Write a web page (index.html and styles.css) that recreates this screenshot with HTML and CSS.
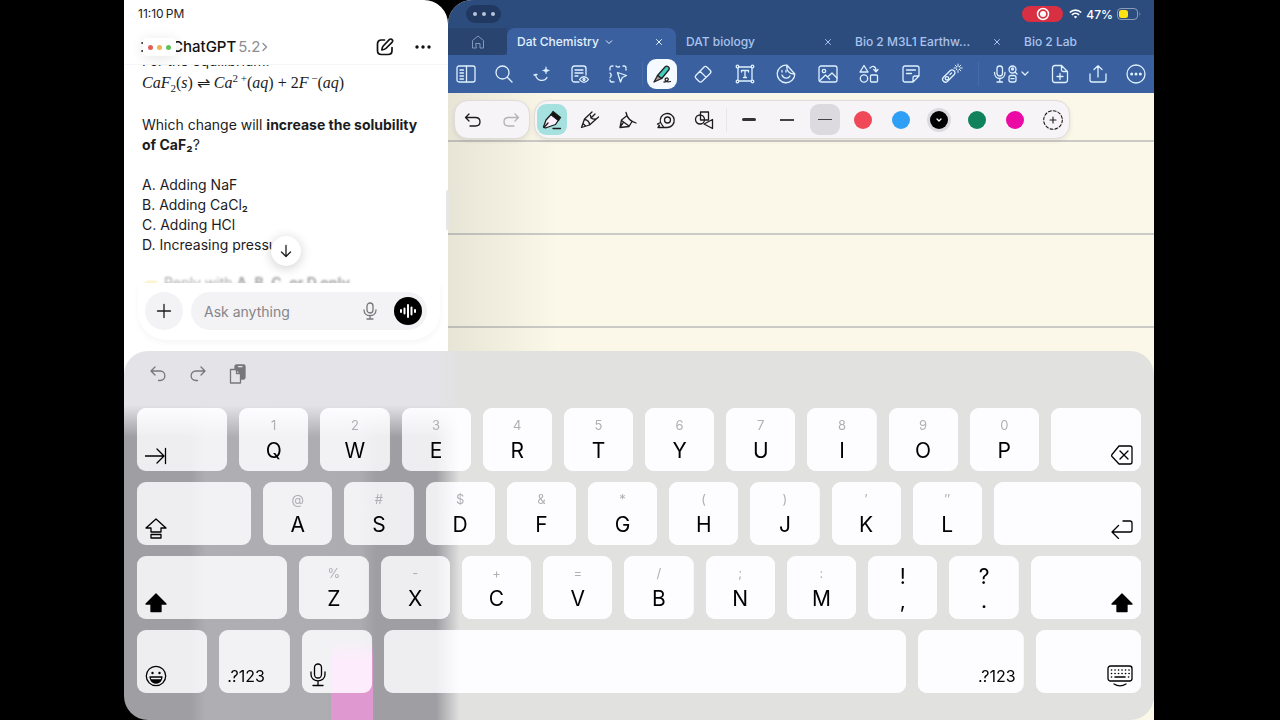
FILE: index.html
```html
<!DOCTYPE html>
<html lang="en">
<head>
	<meta charset="utf-8">
	<meta name="viewport" content="width=device-width, initial-scale=1">
	<title>Dat Chemistry</title>
	<link rel="stylesheet" href="styles.css">
</head>
<body>
	<div class="screen">

		<section class="chat">
			<div class="chat-status">11:10&thinsp;PM</div>
			<header class="chat-header">
				<button class="icon-button menu-button" aria-label="Menu">
					<svg width="20" height="20" viewBox="0 0 20 20"><path d="M2 6h16M2 14h11"/></svg>
				</button>
				<button class="model-button"><b>ChatGPT</b> <span>5.2</span>
					<svg width="6" height="10" viewBox="0 0 6 10"><path d="M1 1.500L4.500 5 1 8.500"/></svg>
				</button>
				<div class="window-controls"><i class="red"></i><i class="yellow"></i><i class="green"></i></div>
				<button class="icon-button compose-button" aria-label="New chat">
					<svg width="18" height="18" viewBox="0 0 18 18"><path d="M8.500 2H5.500C3 2 1.500 3.500 1.500 6v6.500C1.500 15 3 16.500 5.500 16.500H12c2.500 0 4-1.500 4-4V9.500"/><path d="M13.300 1.700c1-1 2.200-.8 2.800-.1.700.7.700 1.800-.1 2.700L9.800 10.500c-.9.900-2.600 1.300-4 1.500.2-1.500.5-3 1.400-4z"/></svg>
				</button>
				<button class="icon-button" aria-label="More">
					<svg width="18" height="6" viewBox="0 0 18 6"><g fill="#111" stroke="none"><circle cx="3" cy="3" r="1.700"/><circle cx="9" cy="3" r="1.700"/><circle cx="15" cy="3" r="1.700"/></g></svg>
				</button>
			</header>

			<div class="messages">
				<div class="message">
					<p class="intro">For the equilibrium:</p>
					<p class="equation"><i>CaF</i><sub>2</sub>(<i>s</i>) ⇌ <i>Ca</i><sup>2 +</sup>(<i>aq</i>) + 2<i>F</i><sup> −</sup>(<i>aq</i>)</p>
					<p>Which change will <strong>increase the solubility of CaF₂</strong>?</p>
					<ol class="answers">
						<li>A. Adding NaF</li>
						<li>B. Adding CaCl₂</li>
						<li>C. Adding HCl</li>
						<li>D. Increasing pressure</li>
					</ol>
					<p class="reply-hint">
						<svg width="16" height="16" viewBox="0 0 16 16"><path d="M1 12c0-3 3-6 6-6h7c2 0 2 2 0 2H9l1 6H5c-3 0-4-1-4-2z" fill="#f5d64a"/></svg>
						<span>Reply with <strong>A, B, C, or D only</strong></span>
					</p>
				</div>
				<button class="scroll-down" aria-label="Scroll to bottom">
					<svg width="14" height="14" viewBox="0 0 14 14"><path d="M7 1.500v11M2.500 8L7 12.500 11.500 8"/></svg>
				</button>
			</div>

			<form class="composer">
				<button type="button" class="add-button" aria-label="Add">
					<svg width="16" height="16" viewBox="0 0 16 16"><path d="M8 1.500v13M1.500 8h13"/></svg>
				</button>
				<div class="ask-box">
					<input type="text" placeholder="Ask anything" aria-label="Ask anything">
					<button type="button" class="dictate-button" aria-label="Dictate">
						<svg width="14" height="18" viewBox="0 0 14 18"><rect x="4" y="1" width="6" height="10" rx="3"/><path d="M1 8c0 7.500 12 7.500 12 0M7 13.500V17M4 17h6"/></svg>
					</button>
					<button type="button" class="voice-button" aria-label="Voice mode">
						<svg width="18" height="16" viewBox="0 0 18 16"><path d="M2 7v2M5.500 5.500v5M9 2v12M12.500 4.500v7M16 7v2"/></svg>
					</button>
				</div>
			</form>
		</section>

		<section class="notes">
			<div class="notes-top">
				<div class="notes-status">
					<button class="multitask" aria-label="Multitasking"><i></i><i></i><i></i></button>
					<div class="status-right">
						<span class="recording"><svg width="14" height="14" viewBox="0 0 14 14"><circle cx="7" cy="7" r="5.500" fill="none" stroke="#fff" stroke-width="1.500"/><circle cx="7" cy="7" r="3" fill="#fff"/></svg></span>
						<svg width="13" height="10" viewBox="0 0 13 10" fill="none" stroke="#fff" stroke-width="1.700"><path d="M.8 3.500c3.300-3.200 8.100-3.200 11.400 0M2.900 5.900c2.100-2 5.100-2 7.200 0"/><path d="M4.800 7.700L6.500 9.600l1.700-1.900c-1-.9-2.400-.9-3.400 0z" fill="#fff" stroke="none"/></svg>
						<span>47%</span>
						<svg width="24" height="12" viewBox="0 0 24 12"><rect x=".5" y=".5" width="20" height="11" rx="3.500" fill="none" stroke="#8b9cba"/><path d="M22.500 4.200c1 .5 1 3 0 3.600z" fill="#8b9cba"/><rect x="2" y="2" width="9" height="8" rx="2.500" fill="#ffe111"/></svg>
					</div>
				</div>
				<nav class="tabs">
					<button class="home-tab" aria-label="Home">
						<svg width="14" height="14" viewBox="0 0 14 14"><path d="M5 13H1.500V5.500L7 1l5.500 4.500V13H9V8.500H5z"/></svg>
					</button>
					<div class="tab tab-active">
						<a href="#">Dat Chemistry <svg width="8" height="6" viewBox="0 0 8 6"><path d="M1 1.500l3 3 3-3"/></svg></a>
						<button aria-label="Close tab"><svg width="8" height="8" viewBox="0 0 8 8"><path d="M1.500 1.500l5 5M6.500 1.500l-5 5"/></svg></button>
					</div>
					<div class="tab">
						<a href="#">DAT biology</a>
						<button aria-label="Close tab"><svg width="8" height="8" viewBox="0 0 8 8"><path d="M1.500 1.500l5 5M6.500 1.500l-5 5"/></svg></button>
					</div>
					<div class="tab">
						<a href="#">Bio 2 M3L1 Earthw...</a>
						<button aria-label="Close tab"><svg width="8" height="8" viewBox="0 0 8 8"><path d="M1.500 1.500l5 5M6.500 1.500l-5 5"/></svg></button>
					</div>
					<div class="tab tab-last"><a href="#">Bio 2 Lab</a></div>
				</nav>
				<div class="toolbar">
					<div class="tool-group">
						<button aria-label="Sidebar"><svg width="20" height="20" viewBox="0 0 20 20"><rect x="1" y="2" width="18" height="16" rx="2"/><path d="M10.500 2v16M4 6h3.500M4 9h3.500M4 12h3.500M4 15h3.500"/></svg></button>
						<button aria-label="Search"><svg width="20" height="20" viewBox="0 0 20 20"><circle cx="8.500" cy="8.500" r="6.500"/><path d="M13.300 13.300L18 18"/></svg></button>
						<button aria-label="Assistant"><svg width="20" height="20" viewBox="0 0 20 20"><path d="M2 11l3-.5M3.500 10.500c1 7 9 7.500 11.500 3"/><path d="M14 3c.4 2.500 1 3 3.500 3.500C15 7 14.400 7.500 14 10c-.4-2.500-1-3-3.500-3.500C13 6 13.600 5.500 14 3z" fill="#dff1ff" stroke-width=".5"/></svg></button>
						<button aria-label="Read only"><svg width="20" height="20" viewBox="0 0 20 20"><path d="M9 18H4.500c-1.500 0-2.500-1-2.500-2.500v-11C2 3 3 2 4.500 2h9C15 2 16 3 16 4.500V11M5 6h8M5 9h8M5 12h3"/><path d="M9.500 15.500c2.500-3.700 6.500-3.700 9 0-2.500 3.700-6.500 3.700-9 0z"/><circle cx="14" cy="15.500" r="1"/></svg></button>
						<button aria-label="Lasso"><svg width="20" height="20" viewBox="0 0 20 20"><path d="M2 6V4c0-1 1-2 2-2h1M8 2c1.500 1.500 3 1.500 4 0M15 2h1c1 0 2 1 2 2v2M2 9c1.500 1 1.500 3 0 4.500M2 16c0 1 1 2 2 2h2" stroke-dasharray="4 1"/><path d="M9.500 8.500l9 3-4.200 2-1.800 4.500z"/></svg></button>
					</div>
					<i class="divider"></i>
					<div class="tool-group tool-group-wide">
						<button class="tool-active" aria-label="Pen"><svg width="22" height="22" viewBox="0 0 22 22"><path d="M6.500 12.500L14 4c2-2 5.500.5 3.700 3l-7 8.500z" fill="#43cdbd"/><path d="M6.500 12.500L3 19l7.700-3.500z" fill="#a99" /><path d="M13 19c3 0 5-2 4-3.500s-4 .5-2.500 2c1 1.500 3.500 1.500 5 1"/></svg></button>
						<button aria-label="Eraser"><svg width="20" height="20" viewBox="0 0 20 20"><path d="M2.800 11.500l8-8.300c1-1 2.300-1 3.300 0l3 3c1 1 1 2.300 0 3.300l-8 7.800c-1 1-2.200 1-3.200 0l-3-3c-.8-.8-.8-2-.1-2.800zM7 7.200l6.200 6.200"/></svg></button>
						<button aria-label="Text"><svg width="20" height="20" viewBox="0 0 20 20"><path d="M4 3h12M4 17h12M3 4v12M17 4v12M6.500 8V6.500h7V8M10 6.500v7M8.500 13.500h3"/><g fill="#3a609f"><circle cx="2.500" cy="2.500" r="1.300"/><circle cx="17.500" cy="2.500" r="1.300"/><circle cx="2.500" cy="17.500" r="1.300"/><circle cx="17.500" cy="17.500" r="1.300"/></g></svg></button>
						<button aria-label="Sticker"><svg width="20" height="20" viewBox="0 0 20 20"><path d="M11 1.200A8.800 8.800 0 1 0 18.800 10zM11 1.200c-1 5 2 9.300 7.800 8.800M6 11c1.500 4 6.500 4 8 1"/><path d="M6 6.500v1.500M10 6.500v1.500"/></svg></button>
						<button aria-label="Image"><svg width="20" height="20" viewBox="0 0 20 20"><rect x="1" y="2" width="18" height="16" rx="2"/><circle cx="6" cy="7" r="1.700"/><path d="M1.500 17l6-6 4 4M9.500 13l4.500-4 5 5"/></svg></button>
						<button aria-label="Elements"><svg width="20" height="20" viewBox="0 0 20 20"><path d="M5 1.500L9 8H1zM11 4c3-3 6-1.500 6 3M14.700 5.500L17 7.800l2-2.300"/><circle cx="5" cy="14.500" r="3.700"/><rect x="11.500" y="11" width="7" height="7" rx="1"/></svg></button>
						<button aria-label="Sticky note"><svg width="20" height="20" viewBox="0 0 20 20"><path d="M12 18H4c-1.500 0-2-1-2-2V4c0-1 .5-2 2-2h12c1.500 0 2 1 2 2v8zM12 18v-4c0-1.500.5-2 2-2h4M5.500 6h9M5.500 9.500h5"/></svg></button>
						<button aria-label="Laser pointer"><svg width="22" height="22" viewBox="0 0 22 22"><path d="M2.300 14.500l7-7c2.500-2 6 1.500 4 4l-7 7c-2.700 2.200-6.200-1.500-4-4z"/><circle cx="6" cy="15.300" r="1.700"/><path d="M9 11.500l1.500-1.500"/><path d="M17 1v2.500M17 7v2.500M13 5h2.500M18.800 5h2.500M14.200 2.200l1.600 1.600M18.200 6.200l1.600 1.600M19.800 2.200l-1.600 1.600M15 7l.8-.8" stroke-width="1"/></svg></button>
					</div>
					<i class="divider divider-spaced"></i>
					<div class="tool-group">
						<button class="record-tool" aria-label="Record"><svg width="36" height="20" viewBox="0 0 36 20"><rect x="4" y="2" width="5.500" height="10" rx="2.750"/><path d="M1.500 8.500c0 8 10.500 8 10.500 0M6.800 14.500V18M4 18h5.500"/><circle cx="19.500" cy="5.500" r="3.500"/><circle cx="19.500" cy="5" r="1"/><path d="M22 8l2 2"/><rect x="16" y="11.500" width="7" height="6.500" rx="2"/><path d="M18 14.700h3M29 8l3 3 3-3"/></svg></button>
						<button aria-label="Add page"><svg width="20" height="20" viewBox="0 0 20 20"><path d="M11.500 1.500H5c-1.500 0-2.500 1-2.500 2.500v12c0 1.500 1 2.500 2.500 2.500h10c1.500 0 2.500-1 2.500-2.500V7.500zM11.500 1.500V6c0 1 .5 1.500 1.500 1.500h4.500M10 9.500v6M7 12.500h6"/></svg></button>
						<button aria-label="Share"><svg width="20" height="20" viewBox="0 0 20 20"><path d="M10 13V2M6 5.500L10 1.700l4 3.800M2 10v6c0 1.500.5 2 2 2h12c1.500 0 2-.5 2-2v-6"/></svg></button>
						<button aria-label="More"><svg width="20" height="20" viewBox="0 0 20 20"><circle cx="10" cy="10" r="9"/><g fill="#dff1ff" stroke="none"><circle cx="5.700" cy="10" r="1.500"/><circle cx="10" cy="10" r="1.500"/><circle cx="14.300" cy="10" r="1.500"/></g></svg></button>
					</div>
				</div>
			</div>

			<div class="page">
				<div class="pen-bar">
					<div class="pill">
						<button aria-label="Undo"><svg width="20" height="20" viewBox="0 0 20 20"><path d="M6 4L2.500 7.500 6 11M3 7.500h9.500c6 0 6 8.500 0 8.500H7"/></svg></button>
						<button class="faded" aria-label="Redo"><svg width="20" height="20" viewBox="0 0 20 20"><path d="M14 4l3.500 3.500L14 11M17 7.500H7.500c-6 0-6 8.500 0 8.500H13"/></svg></button>
					</div>
					<div class="pill">
						<button class="pen-active" aria-label="Fountain pen"><svg width="20" height="20" viewBox="0 0 20 20"><path d="M9 4.500l7.500 5.500-3 4.500L3.500 18 1.500 17 4 10z" fill="#fbeffb"/><path d="M9 4.500l2-3 7.500 6-2 3z" fill="#111"/><path d="M2 17.500L6 13M11 18.500h7.500"/></svg></button>
						<button aria-label="Ballpoint"><svg width="20" height="20" viewBox="0 0 20 20"><path d="M12 2L4.500 9 1.500 17.500 9.500 15 18.500 7M4.500 9.500c2.500 0 5 2.500 5 5M10.500 5.500c0 3 2 4 5 3.500M15 4l-4 4M3 13.500l2.500 2.500"/></svg></button>
						<button aria-label="Brush"><svg width="20" height="20" viewBox="0 0 20 20"><path d="M8 2.500c1 5 5 9 10 10.500M8.500 6L3.500 10 2 17.500l9-1 3-5M3.500 10.500l7.500 5.500M2 17l3-4"/></svg></button>
						<button aria-label="Tape"><svg width="20" height="20" viewBox="0 0 20 20"><path d="M4.500 12.500a7 7 0 1 1 7 5H2l1.500-2L1.500 14l3-1.500 3 4.500"/><circle cx="11.500" cy="10" r="3"/></svg></button>
						<button aria-label="Shapes"><svg width="20" height="20" viewBox="0 0 20 20"><circle cx="6" cy="9.500" r="4.500"/><rect x="6.500" y="2" width="8" height="8"/><path d="M10 14l8.500-4.500v9z" fill="#f7f4f8"/></svg></button>
						<i class="divider"></i>
						<button aria-label="Thick stroke"><i class="stroke stroke-thick"></i></button>
						<button aria-label="Medium stroke"><i class="stroke stroke-medium"></i></button>
						<button class="stroke-active" aria-label="Thin stroke"><i class="stroke"></i></button>
						<button aria-label="Red"><i class="swatch swatch-red"></i></button>
						<button aria-label="Blue"><i class="swatch swatch-blue"></i></button>
						<button aria-label="Black"><i class="swatch swatch-black"><svg width="6" height="4" viewBox="0 0 6 4"><path d="M1 1l2 2 2-2"/></svg></i></button>
						<button aria-label="Green"><i class="swatch swatch-green"></i></button>
						<button aria-label="Pink"><i class="swatch swatch-pink"></i></button>
						<button aria-label="Add color"><svg class="add-color" width="20" height="20" viewBox="0 0 20 20"><circle cx="10" cy="10" r="9.300" stroke-dasharray="2.800 2.070"/><path d="M10 7v6M7 10h6"/></svg></button>
					</div>
				</div>
			</div>
		</section>

		<i class="split-handle"></i>

		<div class="keyboard">
			<div class="shortcuts">
				<button aria-label="Undo"><svg width="18" height="18" viewBox="0 0 18 18"><path d="M6 2L2 6l4 4M2.500 6H11c6.500 0 6.500 9.500 0 9.500H9.500"/></svg></button>
				<button aria-label="Redo"><svg width="18" height="18" viewBox="0 0 18 18"><path d="M12 2l4 4-4 4M15.500 6H7c-6.500 0-6.500 9.500 0 9.500h1.500"/></svg></button>
				<button aria-label="Paste"><svg width="18" height="20" viewBox="0 0 18 20"><path d="M6 5V2.500C6 1.500 6.500 1 7.500 1h7c1 0 1.500.5 1.500 1.500v11c0 1-.5 1.500-1.500 1.500H12V9L8 5z" fill="#77777b"/><path class="paper" d="M1.500 5.500h6l4 4V19h-10z"/><path d="M7.500 5.500v4h4"/><path class="clip" d="M9.500 2.700h3.500"/></svg></button>
			</div>
			<div class="key-row">
				<button class="key key-tab" aria-label="Tab"><svg width="22" height="18" viewBox="0 0 22 18"><path d="M0 9h19M12 2l7 7-7 7M20.500 1.500v15"/></svg></button>
				<button class="key"><small>1</small>Q</button>
				<button class="key"><small>2</small>W</button>
				<button class="key"><small>3</small>E</button>
				<button class="key"><small>4</small>R</button>
				<button class="key"><small>5</small>T</button>
				<button class="key"><small>6</small>Y</button>
				<button class="key"><small>7</small>U</button>
				<button class="key"><small>8</small>I</button>
				<button class="key"><small>9</small>O</button>
				<button class="key"><small>0</small>P</button>
				<button class="key key-tab key-right" aria-label="Delete"><svg width="22" height="20" viewBox="0 0 22 20"><path d="M8 1h11c1.500 0 2 .5 2 2v14c0 1.500-.5 2-2 2H8l-7-7.500c-.7-.8-.7-1.200 0-2zM9 6l8 8M17 6l-8 8"/></svg></button>
			</div>
			<div class="key-row">
				<button class="key key-caps" aria-label="Caps lock"><svg width="22" height="21" viewBox="0 0 22 21"><path d="M11 1l10 9h-5v4H6v-4H1zM6 16.500h10V20H6z"/></svg></button>
				<button class="key"><small>@</small>A</button>
				<button class="key"><small>#</small>S</button>
				<button class="key"><small>$</small>D</button>
				<button class="key"><small>&amp;</small>F</button>
				<button class="key"><small>*</small>G</button>
				<button class="key"><small>(</small>H</button>
				<button class="key"><small>)</small>J</button>
				<button class="key"><small>′</small>K</button>
				<button class="key"><small>″</small>L</button>
				<button class="key key-return key-right" aria-label="Return"><svg width="22" height="20" viewBox="0 0 22 20"><path d="M12 2h7c1.500 0 2 .5 2 2v7c0 1.500-.5 2-2 2H1M7.500 6.500L1 13l6.500 6.500"/></svg></button>
			</div>
			<div class="key-row">
				<button class="key key-shift" aria-label="Shift"><svg width="22" height="20" viewBox="0 0 22 20"><path d="M11 1l10 10h-5v7.500H6V11H1z" fill="#000"/></svg></button>
				<button class="key"><small>%</small>Z</button>
				<button class="key"><small>-</small>X</button>
				<button class="key"><small>+</small>C</button>
				<button class="key"><small>=</small>V</button>
				<button class="key"><small>/</small>B</button>
				<button class="key"><small>;</small>N</button>
				<button class="key"><small>:</small>M</button>
				<button class="key key-mark"><span>!</span><span>,</span></button>
				<button class="key key-mark"><span>?</span><span>.</span></button>
				<button class="key key-shift-right key-right" aria-label="Shift"><svg width="22" height="20" viewBox="0 0 22 20"><path d="M11 1l10 10h-5v7.500H6V11H1z" fill="#000"/></svg></button>
			</div>
			<div class="key-row">
				<button class="key key-small" aria-label="Emoji"><svg width="22" height="22" viewBox="0 0 22 22"><circle cx="11" cy="11" r="9.700"/><circle cx="7.500" cy="8" r="1.200" fill="#000" stroke="none"/><circle cx="14.500" cy="8" r="1.200" fill="#000" stroke="none"/><path d="M5 12h12c-.5 7-11.500 7-12 0z"/><path d="M6 15h10c-2 4-8 4-10 0z" fill="#000"/></svg></button>
				<button class="key key-small">.?123</button>
				<button class="key key-small" aria-label="Dictation"><svg width="16" height="24" viewBox="0 0 16 24"><rect x="4.500" y="1" width="7" height="14" rx="3.500"/><path d="M1 9v2.500c0 8.500 14 8.500 14 0V9M8 18v4.500M3 22.500h10"/></svg></button>
				<button class="key key-space" aria-label="Space"></button>
				<button class="key key-wide key-right">.?123</button>
				<button class="key key-wide key-right" aria-label="Hide keyboard"><svg width="26" height="22" viewBox="0 0 26 22"><rect x="1" y="1" width="24" height="15" rx="2.500"/><path class="dots" d="M4.500 5h18M4.500 8.500h18"/><path class="space-bar" d="M4.500 12h.1M8 12h10M21.500 12h.1"/><path d="M7 19c4 2.500 8 2.500 12 0"/></svg></button>
			</div>
		</div>

	</div>
</body>
</html>
```

FILE: styles.css
```css
* {
	box-sizing: border-box;
}

body {
	margin: 0;
	background-color: #000;
	color: #1c1c1e;
	font-family: Inter, "Liberation Sans", sans-serif;
}

button {
	margin: 0;
	padding: 0;
	border: none;
	background: none;
	color: inherit;
	font-family: inherit;
	cursor: pointer;
}

p {
	margin: 0;
}

svg {
	flex: none;
}

button svg {
	display: block;
	fill: none;
	stroke: currentColor;
	stroke-width: 1.3;
	stroke-linecap: round;
	stroke-linejoin: round;
}

.screen {
	position: relative;
	display: flex;
	min-height: 100vh;
	margin: 0 126px 0 124px;
	overflow: hidden;
}

/* Chat pane */
.chat {
	flex: 0 0 324px;
	min-width: 0;
	height: 351px;
	display: flex;
	flex-direction: column;
	background-color: #fff;
	border-radius: 0 24px 0 0;
	box-shadow: 0 30px 0 #fff;
}

.chat-status {
	padding: 6px 14px 0;
	font-size: 12px;
	line-height: 16px;
}

.chat-header {
	position: relative;
	display: flex;
	align-items: center;
	height: 43px;
	padding: 7px 16px 0 16px;
	border-bottom: 1px solid #f6f6f7;
	color: #111;
}

.icon-button svg {
	stroke-width: 1.7;
}

.menu-button {
	width: 32px;
}

.model-button {
	display: flex;
	align-items: center;
	gap: 2px;
	font-size: 15px;
	line-height: 20px;
}

.model-button b {
	font-weight: 500;
}

.model-button span,
.model-button svg {
	color: #8e8e93;
}

.compose-button {
	margin-left: auto;
	margin-right: 20px;
}

/* Floating window controls, on top of the header */
.window-controls {
	position: absolute;
	left: 19px;
	top: 16px;
	display: flex;
	align-items: center;
	justify-content: center;
	gap: 4px;
	width: 33px;
	height: 18px;
	border-radius: 4px;
	background-color: #fff;
	box-shadow: 0 2px 14px rgba(0, 0, 0, 0.1);
}

.window-controls i {
	width: 5px;
	height: 5px;
	border-radius: 50%;
}

.red {
	background-color: #e0605e;
}

.yellow {
	background-color: #edb458;
}

.green {
	background-color: #62c15b;
}

.messages {
	position: relative;
	flex: 1;
	min-height: 0;
	overflow: hidden;
	padding: 0 18px;
}

.message {
	margin-top: -14px;
	font-size: 14px;
	line-height: 20px;
}

.intro {
	margin-bottom: 2px;
}

.equation {
	margin-bottom: 22px;
	font-family: "Liberation Serif", serif;
	font-size: 16px;
	line-height: 20px;
	white-space: nowrap;
}

.equation sub,
.equation sup {
	font-size: 11px;
	line-height: 0;
}

.answers {
	margin: 20px 0 18px;
	padding: 0;
	list-style: none;
}

.reply-hint {
	display: flex;
	align-items: center;
	gap: 6px;
	opacity: 0.4;
	filter: blur(1px);
}

.scroll-down {
	position: absolute;
	left: 50%;
	bottom: 17px;
	display: grid;
	place-items: center;
	width: 30px;
	height: 30px;
	margin-left: -15px;
	border-radius: 50%;
	background-color: #fff;
	box-shadow: 0 2px 12px rgba(0, 0, 0, 0.2);
}

.composer {
	display: flex;
	gap: 8px;
	margin: 0 8px 11px 14px;
	padding: 9px 13px 10px 7px;
	border-radius: 0 0 28px 28px;
	box-shadow: 0 3px 6px rgba(0, 0, 0, 0.04);
}

.add-button,
.ask-box {
	height: 38px;
	border-radius: 19px;
	background-color: #f3f2f5;
}

.add-button {
	display: grid;
	place-items: center;
	width: 38px;
}

.ask-box {
	flex: 1;
	min-width: 0;
	display: flex;
	align-items: center;
	padding: 0 5px 0 13px;
}

.ask-box input {
	flex: 1;
	min-width: 0;
	padding: 0;
	border: none;
	outline: none;
	background: none;
	font-family: inherit;
	font-size: 14px;
}

.ask-box input::placeholder {
	color: #858589;
}

.dictate-button {
	margin-right: 17px;
	color: #77777b;
}

.voice-button {
	display: grid;
	place-items: center;
	width: 28px;
	height: 28px;
	border-radius: 50%;
	background-color: #000;
	color: #fff;
}

.voice-button svg {
	stroke-width: 2;
}

/* Notes app */
.notes {
	flex: 1;
	min-width: 0;
	display: flex;
	flex-direction: column;
	border-radius: 24px 0 0 0;
	overflow: hidden;
	background-color: #fbf8e9;
}

.notes-top {
	background-color: #2c4c7e;
	color: #a9c3ee;
}

.notes-status {
	display: flex;
	align-items: center;
	justify-content: space-between;
	height: 28px;
	padding: 0 13px 0 18px;
}

.multitask {
	display: flex;
	align-items: center;
	justify-content: center;
	gap: 5px;
	width: 35px;
	height: 18px;
	border-radius: 9px;
	background-color: #213961;
}

.multitask i {
	width: 4px;
	height: 4px;
	border-radius: 50%;
	background-color: #b9c4d8;
}

.status-right {
	display: flex;
	align-items: center;
	gap: 4px;
	color: #fff;
	font-size: 12px;
	font-weight: 500;
}

.recording {
	display: grid;
	place-items: center;
	width: 41px;
	height: 16px;
	margin-right: 2px;
	border-radius: 8px;
	background-color: #d92f42;
}

.tabs {
	display: flex;
	height: 27px;
	font-size: 12px;
	font-weight: 500;
}

.home-tab {
	flex: none;
	display: grid;
	place-items: center;
	width: 59px;
	background-color: #29446f;
	color: #8298be;
	border-radius: 0 0 6px 0;
}

.home-tab svg,
.tab svg {
	stroke-width: 1;
}

.tab {
	flex: 1 1 169px;
	min-width: 0;
	display: flex;
	align-items: center;
	justify-content: space-between;
	padding: 0 13px 0 10px;
	white-space: nowrap;
}

.tab a {
	display: flex;
	align-items: center;
	gap: 6px;
	color: inherit;
	text-decoration: none;
}

.tab a svg {
	fill: none;
	stroke: currentColor;
}

.tab-active {
	border-radius: 8px 8px 0 0;
	background-color: #3a609f;
	color: #e2f1ff;
}

.tab-last {
	flex-basis: 140px;
}

.toolbar {
	display: flex;
	align-items: center;
	height: 38px;
	padding: 0 3px;
	background-color: #3a609f;
	color: #dff1ff;
}

.tool-group {
	display: flex;
	align-items: center;
	gap: 8px;
}

.tool-group-wide {
	flex: 1;
	gap: 0;
	justify-content: space-between;
}

.tool-group button {
	display: grid;
	place-items: center;
	width: 30px;
	height: 30px;
}

.tool-group .record-tool {
	width: 40px;
	margin-right: 6px;
}

.tool-group .tool-active {
	border-radius: 9px;
	background-color: #f4faff;
	color: #222;
}

.divider {
	width: 1px;
	height: 24px;
	margin: 0 4px 0 9px;
	background-color: #456ba9;
}

.divider-spaced {
	margin: 0 12px 0 11px;
}

/* Ruled paper */
.page {
	flex: 1;
	padding: 7px 6px;
	background-image:
		linear-gradient(to right, rgba(60, 60, 50, 0.1), rgba(60, 60, 50, 0) 110px),
		repeating-linear-gradient(to bottom, transparent 0, transparent 91px, #cbcac6 91px, #cbcac6 93px);
	background-position: 0 0, 0 -44px;
	background-size: 100% 100%, 100% 837px;
}

.pen-bar {
	display: flex;
	gap: 4px;
}

.pill {
	display: flex;
	align-items: center;
	gap: 8px;
	height: 39px;
	padding: 0 1px 0 2px;
	border: 1px solid #dedbd8;
	border-radius: 14px;
	background-color: #f7f4f8;
	box-shadow: 0 2px 5px rgba(0, 0, 0, 0.08);
	color: #1c1c1e;
}

.pill:first-child {
	padding: 0 3px;
}

.pill button {
	display: grid;
	place-items: center;
	width: 30px;
	height: 31px;
	border-radius: 9px;
}

.pill .divider {
	margin: 0 -1px;
	background-color: #e9e6ea;
}

.pill .faded {
	color: #b4b2b5;
}

.pill .pen-active {
	background-color: #a5e1df;
}

.pill .stroke-active {
	background-color: #dcdadf;
}

.add-color {
	stroke-width: 1.1;
}

.stroke {
	width: 14px;
	height: 1px;
	background-color: #444;
}

.stroke-medium {
	height: 2px;
}

.stroke-thick {
	height: 3px;
	border-radius: 2px;
	background-color: #333;
}

.swatch {
	display: grid;
	place-items: center;
	width: 18px;
	height: 18px;
	border-radius: 50%;
}

.swatch-red {
	background-color: #f04858;
}

.swatch-blue {
	background-color: #2f9ff5;
}

.swatch-black {
	background-color: #000;
	box-shadow: 0 0 0 3px #dcdadf;
	color: #fff;
}

.swatch-green {
	background-color: #11835c;
}

.swatch-pink {
	background-color: #ec0aa4;
}

/* Grip between the two apps */
.split-handle {
	position: absolute;
	left: 322px;
	top: 190px;
	width: 3px;
	height: 40px;
	border-radius: 2px;
	background-color: #e6e6e6;
}

/* On-screen keyboard, floats over both apps */
.keyboard {
	position: absolute;
	left: 0;
	right: 0;
	bottom: 0;
	display: flex;
	flex-direction: column;
	gap: 11px;
	padding: 0 13px 27px;
	border-radius: 24px;
	background-color: #e1e1e0;
	background-image:
		linear-gradient(to right, rgba(225, 225, 224, 0) 312px, #e1e1e0 336px),
		linear-gradient(to bottom, #e4e4e8 54px, rgba(228, 228, 232, 0) 86px),
		linear-gradient(to bottom, rgba(224, 152, 208, 0), #e098d0 20px),
		linear-gradient(to right, #9f9fa3 66px, #afafb3 82px, #adadb1 236px, #9f9fa3 252px);
	background-repeat: no-repeat;
	background-position: 0 0, 0 0, 207px 100%, 0 0;
	background-size: 100% 100%, 100% 100%, 42px 80px, 100% 100%;
}

.shortcuts {
	display: flex;
	align-items: center;
	gap: 22px;
	height: 46px;
	padding: 0 12px;
	color: #77777b;
}

.paper {
	fill: #e4e4e8;
}

.clip {
	stroke: #e4e4e8;
}

.key-row {
	display: flex;
	gap: 12px;
}

.key {
	flex: 1 1 69px;
	min-width: 0;
	display: flex;
	flex-direction: column;
	align-items: center;
	gap: 6px;
	height: 63px;
	padding-top: 9px;
	border-radius: 9px;
	background-color: rgba(252, 252, 255, 0.8);
	backdrop-filter: brightness(1.14);
	color: #000;
	font-size: 21px;
	line-height: 24px;
}

.key small {
	color: #b0b0b4;
	font-size: 13px;
	line-height: 16px;
}

.key-mark {
	gap: 0;
}

.key-tab,
.key-caps,
.key-return,
.key-shift,
.key-shift-right,
.key-small,
.key-wide {
	align-items: flex-start;
	justify-content: flex-end;
	padding: 0 8px 6px;
	font-size: 16px;
	line-height: 22px;
}

.key-right {
	align-items: flex-end;
}

.key-tab {
	flex-basis: 90px;
}

.key-caps {
	flex-basis: 114px;
}

.key-return {
	flex-basis: 147px;
}

.key-shift {
	flex-basis: 150px;
}

.key-shift-right {
	flex-basis: 110px;
}

.key-small {
	flex-basis: 70px;
}

.key-space {
	flex-basis: 522px;
}

.key-wide {
	flex-basis: 105px;
}

.dots {
	stroke-width: 1.6;
	stroke-dasharray: 0.1 3.4;
}

.space-bar {
	stroke-width: 1.6;
}
```
